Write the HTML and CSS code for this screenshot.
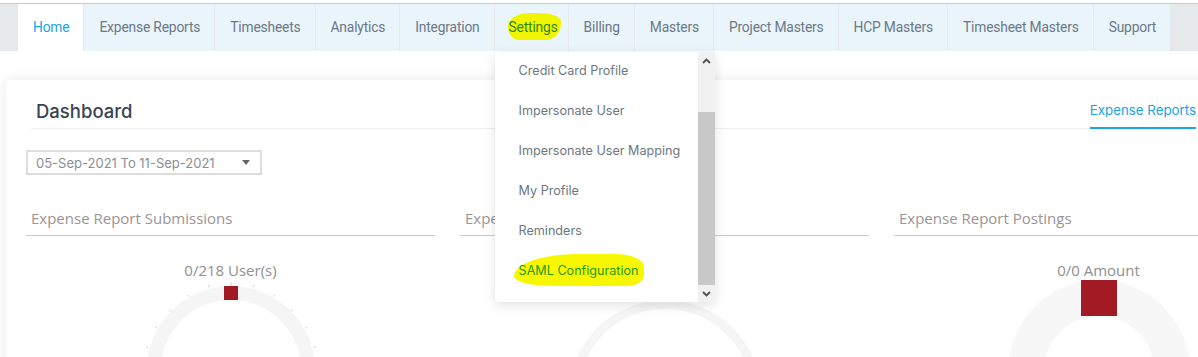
FILE: index.html
```html
<!DOCTYPE html>
<html lang="en">
<head>
    <meta charset="UTF-8">
    <meta name="viewport" content="width=device-width, initial-scale=1.0">
    <title>Dashboard</title>
    <link rel="stylesheet" href="styles.css">
</head>
<body>

    <nav class="top-nav">
        <a class="tab active" href="#">Home</a>
        <a class="tab" href="#">Expense Reports</a>
        <a class="tab" href="#">Timesheets</a>
        <a class="tab" href="#">Analytics</a>
        <a class="tab" href="#">Integration</a>
        <div class="tab tab-settings">
            <span class="marker">Settings</span>
            <div class="dropdown">
                <ul class="dropdown-list">
                    <li>Credit Card Profile</li>
                    <li>Impersonate User</li>
                    <li>Impersonate User Mapping</li>
                    <li>My Profile</li>
                    <li>Reminders</li>
                    <li class="saml"><span class="marker-blob">SAML Configuration</span></li>
                </ul>
                <div class="scrollbar">
                    <div class="scroll-arrow">
                        <svg width="9" height="6" viewBox="0 0 9 6"><path d="M1 5 L4.5 1.5 L8 5" fill="none" stroke="#505050" stroke-width="1.8"/></svg>
                    </div>
                    <div class="scroll-track">
                        <div class="scroll-thumb"></div>
                    </div>
                    <div class="scroll-arrow">
                        <svg width="9" height="6" viewBox="0 0 9 6"><path d="M1 1 L4.5 4.5 L8 1" fill="none" stroke="#505050" stroke-width="1.8"/></svg>
                    </div>
                </div>
            </div>
        </div>
        <a class="tab" href="#">Billing</a>
        <a class="tab" href="#">Masters</a>
        <a class="tab" href="#">Project Masters</a>
        <a class="tab" href="#">HCP Masters</a>
        <a class="tab" href="#">Timesheet Masters</a>
        <a class="tab" href="#">Support</a>
    </nav>

    <main class="card">
        <div class="card-header">
            <h2>Dashboard</h2>
            <a class="header-link" href="#">Expense Reports</a>
        </div>

        <div class="date-select">
            <span>05-Sep-2021 To 11-Sep-2021</span>
            <span class="caret"></span>
        </div>

        <div class="panels">
            <section class="panel">
                <h3>Expense Report Submissions</h3>
                <div class="gauge-label">0/218 User(s)</div>
                <svg class="gauge" width="240" height="100" viewBox="0 0 240 100">
                    <circle cx="120" cy="91" r="77" fill="none" stroke="#f5f5f5" stroke-width="14"/>
                    <g stroke="#cfcfcf" stroke-width="1">
                        <line x1="120" y1="3" x2="120" y2="7"/>
                        <line x1="97.5" y1="6.2" x2="98" y2="8.2"/>
                        <line x1="142.5" y1="6.2" x2="142" y2="8.2"/>
                        <line x1="76.5" y1="15.8" x2="77.5" y2="17.5"/>
                        <line x1="163.5" y1="15.8" x2="162.5" y2="17.5"/>
                        <line x1="58.5" y1="30.5" x2="60" y2="32"/>
                        <line x1="181.5" y1="30.5" x2="180" y2="32"/>
                        <line x1="44" y1="48" x2="45.8" y2="49"/>
                        <line x1="196" y1="48" x2="194.2" y2="49"/>
                        <line x1="35" y1="68" x2="37" y2="68.5"/>
                        <line x1="205" y1="68" x2="203" y2="68.5"/>
                        <line x1="32" y1="90" x2="34" y2="90"/>
                        <line x1="208" y1="90" x2="206" y2="90"/>
                    </g>
                    <rect x="113" y="7" width="14" height="14" fill="#a11a24"/>
                </svg>
            </section>
            <section class="panel">
                <h3>Expense Report Approvals</h3>
                <div class="gauge-label cyan">0/0 Report(s)</div>
                <svg class="gauge" width="240" height="100" viewBox="0 0 240 100">
                    <circle cx="120" cy="117" r="91.5" fill="none" stroke="#f5f5f5" stroke-width="9"/>
                </svg>
            </section>
            <section class="panel">
                <h3>Expense Report Postings</h3>
                <div class="gauge-label">0/0 Amount</div>
                <svg class="gauge" width="240" height="100" viewBox="0 0 240 100">
                    <circle cx="120" cy="92" r="73" fill="none" stroke="#f7f7f7" stroke-width="36"/>
                    <rect x="102" y="1" width="36" height="36" fill="#a11a24"/>
                </svg>
            </section>
        </div>
    </main>

</body>
</html>
```

FILE: styles.css
```css
body {
    margin: 0;
    background-color: #ffffff;
    font-family: 'Open Sans', sans-serif;
    width: 1198px;
    height: 357px;
    overflow: hidden;
}

.top-nav {
    display: flex;
    margin-top: 3px;
    height: 47px;
    padding-left: 18px;
    background-color: #e6e9ec;
    border-top: 1px solid #c9cccf;
}

.tab {
    display: flex;
    align-items: center;
    padding: 0 14px 2px 15px;
    margin-right: 1px;
    background-color: #eaf5fb;
    color: #6b7886;
    font-family: 'Roboto', sans-serif;
    font-size: 13.8px;
    letter-spacing: -0.17px;
    white-space: nowrap;
    text-decoration: none;
}

.tab.active {
    background-color: #ffffff;
    color: #1aa3e6;
}

.tab-settings {
    position: relative;
    padding-left: 13px;
    padding-right: 7px;
}

.marker {
    background-color: #f2f500;
    color: #2f8a0a;
    padding: 6px 3px 5px 1px;
    border-radius: 40% 45% 30% 20% / 50% 30% 60% 50%;
}

/* settings dropdown */
.dropdown {
    position: absolute;
    top: calc(100% + 1px);
    left: 0;
    width: 220px;
    height: 250px;
    display: flex;
    background-color: #ffffff;
    box-shadow: 0 3px 12px rgba(0, 0, 0, 0.12);
    border-radius: 0 0 4px 4px;
    overflow: hidden;
    z-index: 10;
    letter-spacing: 0;
}

.dropdown-list {
    flex: 1;
    list-style: none;
    margin: -1px 0 0 0;
    padding: 0;
}

.dropdown-list li {
    height: 40px;
    line-height: 40px;
    padding-left: 24px;
    font-family: 'Inter', sans-serif;
    font-size: 12.6px;
    color: #6d7782;
}

.dropdown-list li.saml {
    color: #1f9a16;
}

.marker-blob {
    background-color: #f7f700;
    padding: 9px 6px 8px 5px;
    margin-left: -5px;
    border-radius: 55% 25% 15% 35% / 80% 45% 40% 35%;
}

.scrollbar {
    width: 17px;
    display: flex;
    flex-direction: column;
    background-color: #f1f1f1;
}

.scroll-arrow {
    height: 17px;
    display: flex;
    align-items: center;
    justify-content: center;
}

.scroll-track {
    flex: 1;
    padding-top: 43px;
}

.scroll-thumb {
    height: 173px;
    background-color: #c8c8c8;
}

/* dashboard card */
.card {
    width: 1212px;
    margin: 29px 0 0 6px;
    padding: 0 20px;
    box-sizing: border-box;
    background-color: #ffffff;
    box-shadow: 0 0 14px rgba(0, 0, 0, 0.09);
    border-radius: 4px;
    height: 300px;
}

.card-header {
    display: flex;
    justify-content: space-between;
    align-items: flex-end;
    height: 48px;
    margin: 0 2px 0 5px;
    border-bottom: 1px solid #eeeeee;
}

.card-header h2 {
    margin: 0 0 6px 5px;
    font-family: 'Inter', sans-serif;
    font-weight: 500;
    font-size: 18.5px;
    color: #3b4450;
}

.header-link {
    font-family: 'Inter', sans-serif;
    font-size: 13.3px;
    color: #1aa3e6;
    text-decoration: none;
    padding-bottom: 9px;
    margin-bottom: -1px;
    border-bottom: 2px solid #1aa3e6;
}

.date-select {
    display: flex;
    align-items: center;
    justify-content: space-between;
    width: 236px;
    height: 25px;
    margin-top: 21px;
    padding: 0 10px 0 8px;
    box-sizing: border-box;
    border: 2px solid #dddddd;
    font-family: 'Inter', sans-serif;
    font-size: 13px;
    color: #8a8f96;
}

.caret {
    width: 0;
    height: 0;
    border-left: 4.5px solid transparent;
    border-right: 4.5px solid transparent;
    border-top: 5px solid #666666;
}

.panels {
    display: grid;
    grid-template-columns: 409px 409px 409px;
    column-gap: 25px;
    margin-top: 33px;
}

.panel {
    display: flex;
    flex-direction: column;
    align-items: center;
}

.panel h3 {
    align-self: stretch;
    margin: 0;
    padding: 0 0 7px 5px;
    border-bottom: 1px solid #cccccc;
    font-weight: 400;
    font-size: 15px;
    line-height: 20px;
    color: #9a9494;
}

.gauge-label {
    margin-top: 25px;
    font-size: 15px;
    line-height: 18px;
    color: #8f8f8f;
}

.gauge-label.cyan {
    color: #3cc8d8;
}

.gauge {
    display: block;
}
```
